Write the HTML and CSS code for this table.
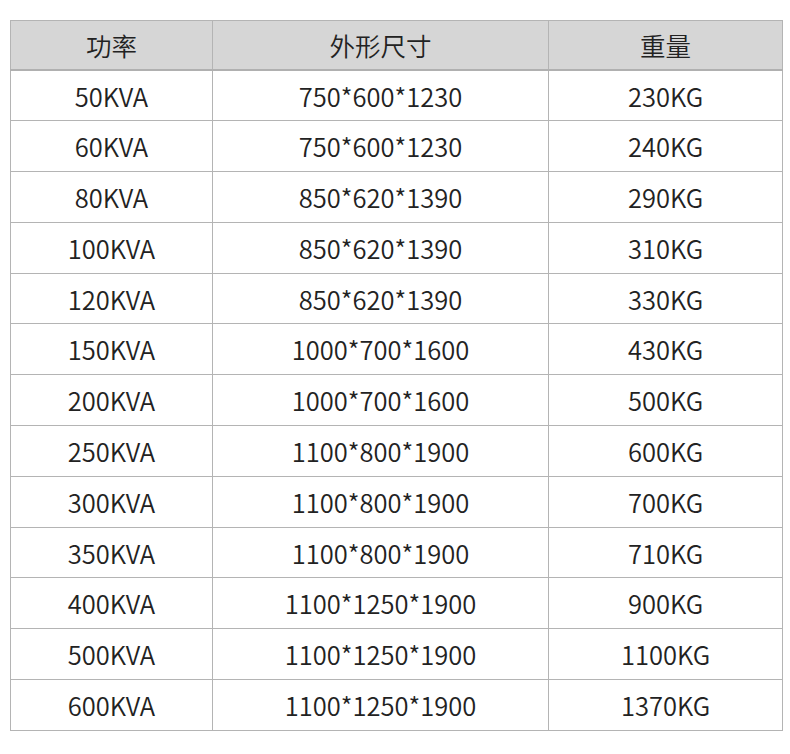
FILE: index.html
```html
<!DOCTYPE html>
<html lang="zh">
<head>
<meta charset="utf-8">
<title>规格表</title>
<link rel="stylesheet" href="styles.css">
</head>
<body>
<table class="spec">
  <colgroup>
    <col class="c1"><col class="c2"><col class="c3">
  </colgroup>
  <thead>
    <tr><th>功率</th><th>外形尺寸</th><th>重量</th></tr>
  </thead>
  <tbody>
    <tr><td>50KVA</td><td>750*600*1230</td><td>230KG</td></tr>
    <tr><td>60KVA</td><td>750*600*1230</td><td>240KG</td></tr>
    <tr><td>80KVA</td><td>850*620*1390</td><td>290KG</td></tr>
    <tr><td>100KVA</td><td>850*620*1390</td><td>310KG</td></tr>
    <tr><td>120KVA</td><td>850*620*1390</td><td>330KG</td></tr>
    <tr><td>150KVA</td><td>1000*700*1600</td><td>430KG</td></tr>
    <tr><td>200KVA</td><td>1000*700*1600</td><td>500KG</td></tr>
    <tr><td>250KVA</td><td>1100*800*1900</td><td>600KG</td></tr>
    <tr><td>300KVA</td><td>1100*800*1900</td><td>700KG</td></tr>
    <tr><td>350KVA</td><td>1100*800*1900</td><td>710KG</td></tr>
    <tr><td>400KVA</td><td>1100*1250*1900</td><td>900KG</td></tr>
    <tr><td>500KVA</td><td>1100*1250*1900</td><td>1100KG</td></tr>
    <tr><td>600KVA</td><td>1100*1250*1900</td><td>1370KG</td></tr>
  </tbody>
</table>
</body>
</html>
```

FILE: styles.css
```css
html, body {
  margin: 0;
  padding: 0;
  background: #ffffff;
}
body {
  padding: 20px 0 0 10px;
  font-family: "Noto Sans CJK SC", "Noto Sans", sans-serif;
  color: #222222;
}
.spec {
  border-collapse: collapse;
  width: 772px;
  table-layout: fixed;
}
.c1 { width: 202px; }
.c2 { width: 336px; }
.c3 { width: 234px; }
.spec th,
.spec td {
  border: 1px solid #b4b4b4;
  padding: 0;
  text-align: center;
  vertical-align: middle;
  font-size: 25.5px;
  font-weight: 350;
  line-height: 30px;
}
.spec thead tr { height: 49.5px; }
.spec th {
  background: #d6d6d6;
  border-bottom: 2px solid #b0b0b0;
}
.spec tbody tr { height: 50.8px; }
```
